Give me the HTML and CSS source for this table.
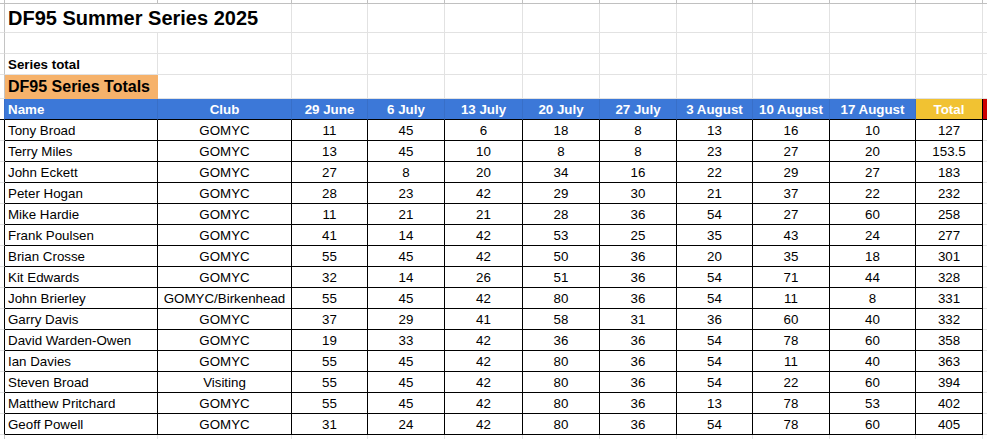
FILE: index.html
```html
<!DOCTYPE html>
<html>
<head>
<meta charset="utf-8">
<title>DF95 Summer Series 2025</title>
<link rel="stylesheet" href="styles.css">
</head>
<body>
<div class="sheet">
  <div class="row strip">
    <div class="c"></div><div class="c"></div><div class="c"></div><div class="c"></div><div class="c"></div><div class="c"></div><div class="c"></div><div class="c"></div><div class="c"></div><div class="c"></div><div class="c"></div><div class="c"></div><div class="c"></div>
  </div>
  <div class="row r-title">
    <div class="c stub"></div><div class="c span2 title">DF95 Summer Series 2025</div><div class="c"></div><div class="c"></div><div class="c"></div><div class="c"></div><div class="c"></div><div class="c"></div><div class="c"></div><div class="c"></div><div class="c"></div><div class="c"></div>
  </div>
  <div class="row">
    <div class="c stub"></div><div class="c"></div><div class="c"></div><div class="c"></div><div class="c"></div><div class="c"></div><div class="c"></div><div class="c"></div><div class="c"></div><div class="c"></div><div class="c"></div><div class="c"></div><div class="c"></div>
  </div>
  <div class="row">
    <div class="c stub"></div><div class="c label">Series total</div><div class="c"></div><div class="c"></div><div class="c"></div><div class="c"></div><div class="c"></div><div class="c"></div><div class="c"></div><div class="c"></div><div class="c"></div><div class="c"></div><div class="c"></div>
  </div>
  <div class="row r-sub">
    <div class="c stub"></div><div class="c subtitle">DF95 Series Totals</div><div class="c"></div><div class="c"></div><div class="c"></div><div class="c"></div><div class="c"></div><div class="c"></div><div class="c"></div><div class="c"></div><div class="c"></div><div class="c"></div><div class="c"></div>
  </div>
  <div class="row head">
    <div class="c stub"></div>
    <div class="c h left">Name</div>
    <div class="c h">Club</div>
    <div class="c h">29 June</div>
    <div class="c h">6 July</div>
    <div class="c h">13 July</div>
    <div class="c h">20 July</div>
    <div class="c h">27 July</div>
    <div class="c h">3 August</div>
    <div class="c h">10 August</div>
    <div class="c h">17 August</div>
    <div class="c h total">Total</div>
    <div class="c h red"></div>
  </div>

  <div class="row data"><div class="c stub"></div><div class="c d left">Tony Broad</div><div class="c d">GOMYC</div><div class="c d">11</div><div class="c d">45</div><div class="c d">6</div><div class="c d">18</div><div class="c d">8</div><div class="c d">13</div><div class="c d">16</div><div class="c d">10</div><div class="c d">127</div><div class="c"></div></div>
  <div class="row data"><div class="c stub"></div><div class="c d left">Terry Miles</div><div class="c d">GOMYC</div><div class="c d">13</div><div class="c d">45</div><div class="c d">10</div><div class="c d">8</div><div class="c d">8</div><div class="c d">23</div><div class="c d">27</div><div class="c d">20</div><div class="c d">153.5</div><div class="c"></div></div>
  <div class="row data"><div class="c stub"></div><div class="c d left">John Eckett</div><div class="c d">GOMYC</div><div class="c d">27</div><div class="c d">8</div><div class="c d">20</div><div class="c d">34</div><div class="c d">16</div><div class="c d">22</div><div class="c d">29</div><div class="c d">27</div><div class="c d">183</div><div class="c"></div></div>
  <div class="row data"><div class="c stub"></div><div class="c d left">Peter Hogan</div><div class="c d">GOMYC</div><div class="c d">28</div><div class="c d">23</div><div class="c d">42</div><div class="c d">29</div><div class="c d">30</div><div class="c d">21</div><div class="c d">37</div><div class="c d">22</div><div class="c d">232</div><div class="c"></div></div>
  <div class="row data"><div class="c stub"></div><div class="c d left">Mike Hardie</div><div class="c d">GOMYC</div><div class="c d">11</div><div class="c d">21</div><div class="c d">21</div><div class="c d">28</div><div class="c d">36</div><div class="c d">54</div><div class="c d">27</div><div class="c d">60</div><div class="c d">258</div><div class="c"></div></div>
  <div class="row data"><div class="c stub"></div><div class="c d left">Frank Poulsen</div><div class="c d">GOMYC</div><div class="c d">41</div><div class="c d">14</div><div class="c d">42</div><div class="c d">53</div><div class="c d">25</div><div class="c d">35</div><div class="c d">43</div><div class="c d">24</div><div class="c d">277</div><div class="c"></div></div>
  <div class="row data"><div class="c stub"></div><div class="c d left">Brian Crosse</div><div class="c d">GOMYC</div><div class="c d">55</div><div class="c d">45</div><div class="c d">42</div><div class="c d">50</div><div class="c d">36</div><div class="c d">20</div><div class="c d">35</div><div class="c d">18</div><div class="c d">301</div><div class="c"></div></div>
  <div class="row data"><div class="c stub"></div><div class="c d left">Kit Edwards</div><div class="c d">GOMYC</div><div class="c d">32</div><div class="c d">14</div><div class="c d">26</div><div class="c d">51</div><div class="c d">36</div><div class="c d">54</div><div class="c d">71</div><div class="c d">44</div><div class="c d">328</div><div class="c"></div></div>
  <div class="row data"><div class="c stub"></div><div class="c d left">John Brierley</div><div class="c d">GOMYC/Birkenhead</div><div class="c d">55</div><div class="c d">45</div><div class="c d">42</div><div class="c d">80</div><div class="c d">36</div><div class="c d">54</div><div class="c d">11</div><div class="c d">8</div><div class="c d">331</div><div class="c"></div></div>
  <div class="row data"><div class="c stub"></div><div class="c d left">Garry Davis</div><div class="c d">GOMYC</div><div class="c d">37</div><div class="c d">29</div><div class="c d">41</div><div class="c d">58</div><div class="c d">31</div><div class="c d">36</div><div class="c d">60</div><div class="c d">40</div><div class="c d">332</div><div class="c"></div></div>
  <div class="row data"><div class="c stub"></div><div class="c d left">David Warden-Owen</div><div class="c d">GOMYC</div><div class="c d">19</div><div class="c d">33</div><div class="c d">42</div><div class="c d">36</div><div class="c d">36</div><div class="c d">54</div><div class="c d">78</div><div class="c d">60</div><div class="c d">358</div><div class="c"></div></div>
  <div class="row data"><div class="c stub"></div><div class="c d left">Ian Davies</div><div class="c d">GOMYC</div><div class="c d">55</div><div class="c d">45</div><div class="c d">42</div><div class="c d">80</div><div class="c d">36</div><div class="c d">54</div><div class="c d">11</div><div class="c d">40</div><div class="c d">363</div><div class="c"></div></div>
  <div class="row data"><div class="c stub"></div><div class="c d left">Steven Broad</div><div class="c d">Visiting</div><div class="c d">55</div><div class="c d">45</div><div class="c d">42</div><div class="c d">80</div><div class="c d">36</div><div class="c d">54</div><div class="c d">22</div><div class="c d">60</div><div class="c d">394</div><div class="c"></div></div>
  <div class="row data"><div class="c stub"></div><div class="c d left">Matthew Pritchard</div><div class="c d">GOMYC</div><div class="c d">55</div><div class="c d">45</div><div class="c d">42</div><div class="c d">80</div><div class="c d">36</div><div class="c d">13</div><div class="c d">78</div><div class="c d">53</div><div class="c d">402</div><div class="c"></div></div>
  <div class="row data"><div class="c stub"></div><div class="c d left">Geoff Powell</div><div class="c d">GOMYC</div><div class="c d">31</div><div class="c d">24</div><div class="c d">42</div><div class="c d">80</div><div class="c d">36</div><div class="c d">54</div><div class="c d">78</div><div class="c d">60</div><div class="c d">405</div><div class="c"></div></div>

  <div class="row">
    <div class="c stub"></div><div class="c"></div><div class="c"></div><div class="c"></div><div class="c"></div><div class="c"></div><div class="c"></div><div class="c"></div><div class="c"></div><div class="c"></div><div class="c"></div><div class="c"></div><div class="c"></div>
  </div>
</div>
</body>
</html>
```

FILE: styles.css
```css
* {
  box-sizing: border-box;
}

html, body {
  margin: 0;
  padding: 0;
  background: #ffffff;
  overflow: hidden;
}

body {
  font-family: "Liberation Sans", Arial, sans-serif;
  font-size: 13.33px;
  color: #000000;
}

.sheet {
  width: 987px;
}

.row {
  display: grid;
  grid-template-columns: 5px 153px 134px 76px 77px 78px 77px 77px 76px 77px 86px 67px 4px;
  height: 21px;
}

.c {
  border-right: 1px solid #e2e2e2;
  border-bottom: 1px solid #e2e2e2;
  display: flex;
  align-items: flex-end;
  justify-content: center;
  padding: 0 3px 1px 3px;
  white-space: nowrap;
  overflow: hidden;
  line-height: 16px;
}

.c:last-child {
  border-right: none;
  padding: 0;
}

.stub {
  border-right-color: #c4c4c4;
  padding: 0;
}

.strip {
  height: 4px;
}

.strip .c {
  border-color: #c0c0c0;
  padding: 0;
}

.r-title {
  height: 29px;
}

.span2 {
  grid-column: span 2;
}

.title {
  justify-content: flex-start;
  font-weight: bold;
  font-size: 20px;
  line-height: 23px;
  padding-bottom: 2px;
}

.label {
  justify-content: flex-start;
  font-weight: bold;
}

.r-sub {
  height: 24px;
}

.subtitle {
  justify-content: flex-start;
  font-weight: bold;
  font-size: 16px;
  line-height: 19px;
  background: #f6b26b;
  border-color: #f6b26b;
  padding-bottom: 2px;
}

.head .c {
  border-bottom-color: #000000;
}

.h {
  background: #3c78d8;
  border-right-color: #386fc8;
  color: #ffffff;
  font-weight: bold;
}

.head .stub {
  border-bottom-color: #000000;
  border-right-color: #386fc8;
}

.left {
  justify-content: flex-start;
}

.h.total {
  background: #f1c232;
  border-right-color: #000000;
}

.h.red {
  background: #cc0000;
  border-right: none;
}

.data .stub {
  border-right-color: #000000;
}

.d {
  border-right-color: #000000;
  border-bottom-color: #000000;
}
```
